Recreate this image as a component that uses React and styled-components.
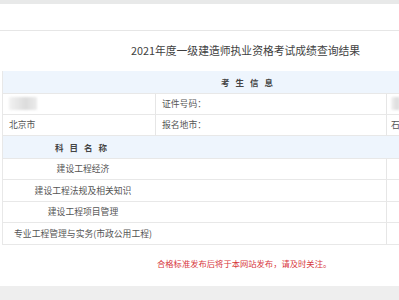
import { Fragment } from 'react';
import styled, { createGlobalStyle } from 'styled-components';

const GlobalStyle = createGlobalStyle`
  html, body {
    margin: 0;
    padding: 0;
    background: #ffffff;
  }
  body {
    width: 399px;
    height: 300px;
    overflow: hidden;
    font-family: "Noto Sans CJK SC", "Liberation Sans", sans-serif;
  }
`;

const Page = styled.div`
  width: 399px;
  height: 300px;
  display: flex;
  flex-direction: column;
  overflow: hidden;
  color: #555555;
`;

const TopBand = styled.div`
  height: 4px;
  background: #e8e9e9;
  flex-shrink: 0;
`;

const Gap = styled.div`
  height: 26px;
  border-bottom: 1px solid #e6e6e6;
  flex-shrink: 0;
`;

const Title = styled.h1`
  margin: 0;
  height: 40px;
  display: flex;
  align-items: center;
  padding-left: 131px;
  padding-bottom: 3px;
  box-sizing: border-box;
  font-size: 10.8px;
  font-weight: 400;
  color: #3f3f3f;
  white-space: nowrap;
  flex-shrink: 0;
`;

const Table = styled.div`
  width: 420px;
  display: grid;
  grid-template-columns: ${(p) => p.$cols};
  border-left: 1px solid #e8e8e8;
  margin-left: 2px;
  flex-shrink: 0;
`;

const HeadCell = styled.div`
  grid-column: 1 / -1;
  height: ${(p) => p.$h}px;
  background: #eef5fd;
  display: flex;
  align-items: center;
  padding-left: ${(p) => p.$pad}px;
  font-size: 8.5px;
  font-weight: 700;
  letter-spacing: 6px;
  color: #444444;
  border-bottom: 1px solid #e8e8e8;
`;

const Cell = styled.div`
  height: ${(p) => p.$h}px;
  display: flex;
  align-items: center;
  justify-content: ${(p) => (p.$center ? 'center' : 'flex-start')};
  padding-left: ${(p) => (p.$center ? 0 : p.$pad ?? 6)}px;
  font-size: 8.8px;
  color: #555555;
  white-space: nowrap;
  border-bottom: 1px solid #e8e8e8;
  border-right: ${(p) => (p.$line ? '1px solid #e6e6e6' : 'none')};
  overflow: hidden;
`;

const Blur = styled.span`
  display: inline-block;
  width: ${(p) => p.$w}px;
  height: 13px;
  background: linear-gradient(90deg, #f2f2f2, #dcdcdc 60%, #ececec);
  filter: blur(1px);
  border-radius: 1px;
`;

const Notice = styled.div`
  height: 41px;
  display: flex;
  align-items: center;
  padding-left: 157px;
  padding-bottom: 5px;
  box-sizing: border-box;
  font-size: 8.3px;
  color: #d7373d;
  white-space: nowrap;
  flex-shrink: 0;
`;

const BottomBand = styled.div`
  flex: 1;
  background: #eeeeee;
`;

const subjects = [
  '建设工程经济',
  '建设工程法规及相关知识',
  '建设工程项目管理',
  '专业工程管理与实务(市政公用工程)',
];

export default function App() {
  return (
    <>
      <GlobalStyle />
      <Page>
        <TopBand />
        <Gap />
        <Title>2021年度一级建造师执业资格考试成绩查询结果</Title>
        <Table $cols="153px 231px 1fr">
          <HeadCell $pad={218} $h={22}>考生信息</HeadCell>
          <Cell $line $h={19.5}>
            <Blur $w={28} />
          </Cell>
          <Cell $line $h={19.5}>证件号码：</Cell>
          <Cell $h={19.5} $pad={4}>
            <Blur $w={10} />
          </Cell>
          <Cell $line $h={20}>北京市</Cell>
          <Cell $line $h={20}>报名地市：</Cell>
          <Cell $h={20} $pad={4}>石</Cell>
        </Table>
        <Table $cols="160px 224px 1fr">
          <HeadCell $pad={52} $h={22}>科目名称</HeadCell>
          {subjects.map((s) => (
            <Fragment key={s}>
              <Cell $center $h={20.5}>{s}</Cell>
              <Cell $line $h={20.5} />
              <Cell $h={20.5} />
            </Fragment>
          ))}
        </Table>
        <Notice>合格标准发布后将于本网站发布，请及时关注。</Notice>
        <BottomBand />
      </Page>
    </>
  );
}
